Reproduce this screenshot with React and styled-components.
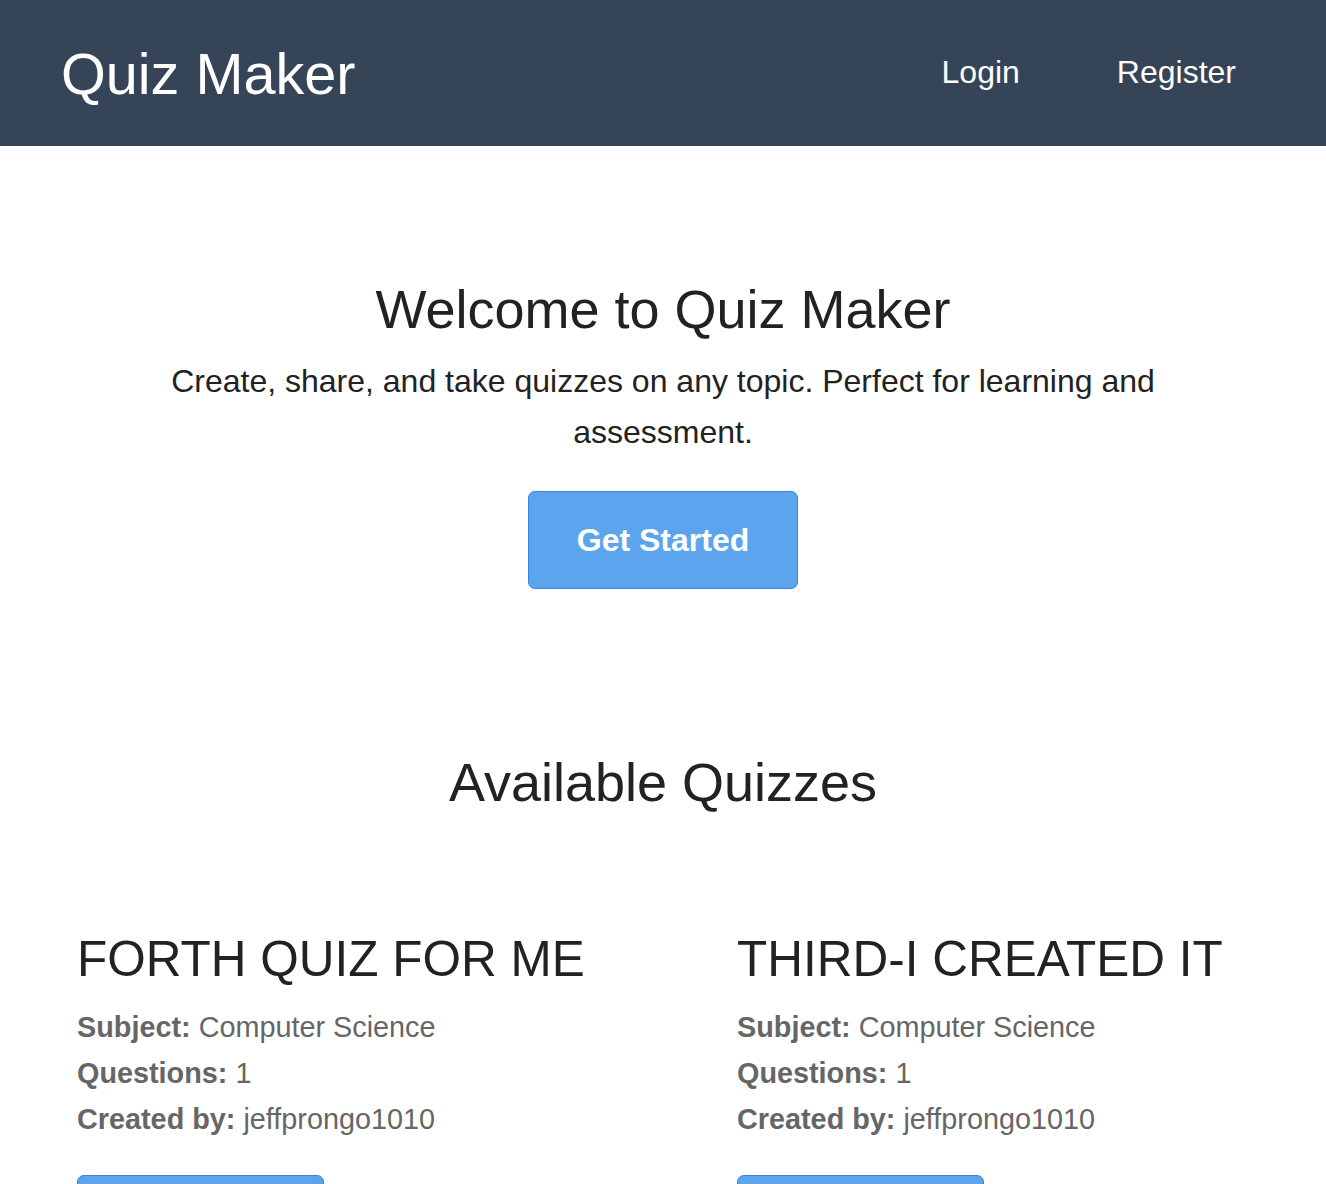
import styled, { createGlobalStyle } from 'styled-components';

const GlobalStyle = createGlobalStyle`
  body {
    margin: 0;
    background: #ffffff;
    font-family: 'Liberation Sans', Arial, Helvetica, sans-serif;
    color: #222222;
  }
  * {
    box-sizing: border-box;
  }
`;

const Header = styled.header`
  height: 146px;
  background-color: #364458;
  display: flex;
  align-items: center;
  justify-content: space-between;
  padding: 0 90px 0 61px;
`;

const Logo = styled.a`
  color: #ffffff;
  font-size: 57.6px;
  text-decoration: none;
  margin-top: 2px;
`;

const Nav = styled.nav`
  display: flex;
  gap: 97px;
  margin-top: -2px;
`;

const NavLink = styled.a`
  color: #ffffff;
  font-size: 32px;
  text-decoration: none;
`;

const Hero = styled.section`
  text-align: center;
  padding: 131px 32px 0;
`;

const Title = styled.h1`
  font-size: 54px;
  font-weight: normal;
  line-height: 1.2;
  margin: 0;
  color: #222222;
`;

const Lead = styled.p`
  font-size: 32px;
  line-height: 1.6;
  max-width: 1024px;
  margin: 14px auto 33px;
`;

const Button = styled.button`
  font-family: inherit;
  font-size: 32px;
  font-weight: bold;
  line-height: 1.15;
  color: #ffffff;
  background-color: #5ca5ee;
  border: 1px solid #3c7ee6;
  border-radius: 7px;
  padding: 29.6px 48px;
  cursor: pointer;
`;

const Quizzes = styled.section`
  padding: 161px 32px 0;
`;

const SectionTitle = styled(Title)`
  text-align: center;
`;

const Grid = styled.div`
  display: grid;
  grid-template-columns: repeat(2, 1fr);
  gap: 58px;
  margin-top: 82px;
`;

const Card = styled.article`
  padding: 32px 45px;
`;

const CardTitle = styled.h2`
  font-size: 49.5px;
  font-weight: normal;
  line-height: 1.2;
  text-transform: uppercase;
  margin: 0 0 16px;
  color: #222222;
  white-space: nowrap;
`;

const Meta = styled.p`
  font-size: 28.8px;
  line-height: 46px;
  color: #666666;
  margin: 0;

  strong {
    font-weight: bold;
  }
`;

const CardActions = styled.div`
  margin-top: 33px;
`;

const quizzes = [
  { id: 4, title: 'Forth quiz for me', subject: 'Computer Science', questions: 1, author: 'jeffprongo1010' },
  { id: 3, title: 'Third-I created it', subject: 'Computer Science', questions: 1, author: 'jeffprongo1010' },
];

function QuizCard({ quiz }) {
  return (
    <Card>
      <CardTitle>{quiz.title}</CardTitle>
      <Meta>
        <strong>Subject:</strong> {quiz.subject}
      </Meta>
      <Meta>
        <strong>Questions:</strong> {quiz.questions}
      </Meta>
      <Meta>
        <strong>Created by:</strong> {quiz.author}
      </Meta>
      <CardActions>
        <Button>Take Quiz</Button>
      </CardActions>
    </Card>
  );
}

export default function App() {
  return (
    <>
      <GlobalStyle />
      <Header>
        <Logo href="#">Quiz Maker</Logo>
        <Nav>
          <NavLink href="#">Login</NavLink>
          <NavLink href="#">Register</NavLink>
        </Nav>
      </Header>
      <Hero>
        <Title>Welcome to Quiz Maker</Title>
        <Lead>
          Create, share, and take quizzes on any topic. Perfect for learning and assessment.
        </Lead>
        <Button>Get Started</Button>
      </Hero>
      <Quizzes>
        <SectionTitle>Available Quizzes</SectionTitle>
        <Grid>
          {quizzes.map((quiz) => (
            <QuizCard key={quiz.id} quiz={quiz} />
          ))}
        </Grid>
      </Quizzes>
    </>
  );
}
